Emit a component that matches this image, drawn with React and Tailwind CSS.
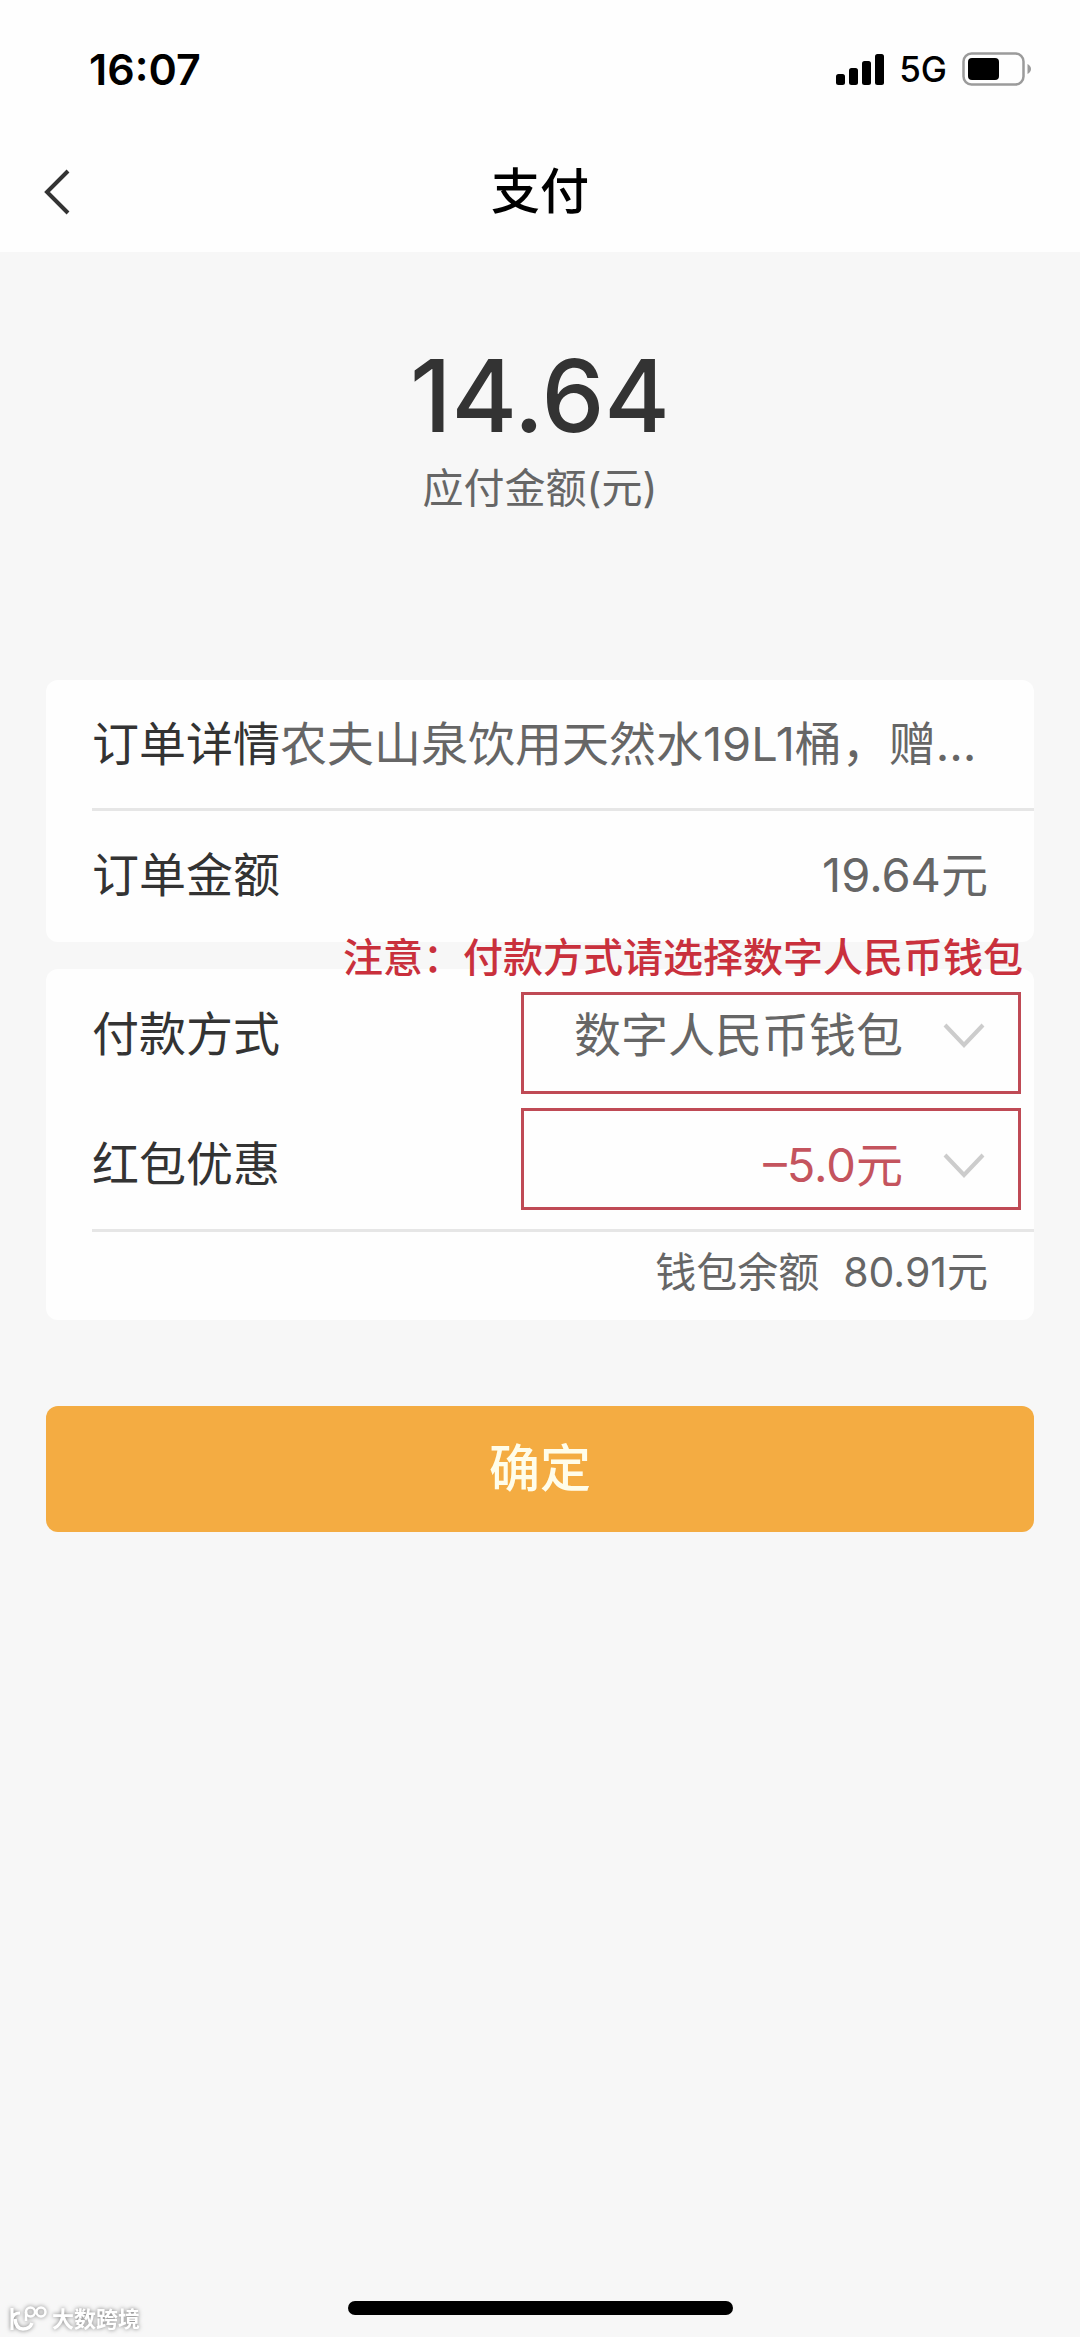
import { useState } from "react";

const SignalIcon = () => (
  <svg width="48" height="31" viewBox="0 0 48 31" fill="black" aria-hidden="true">
    <rect x="0" y="20" width="9" height="11" rx="2.5" />
    <rect x="13" y="14" width="9" height="17" rx="2.5" />
    <rect x="26" y="7" width="9" height="24" rx="2.5" />
    <rect x="39" y="0" width="9" height="31" rx="2.5" />
  </svg>
);

const BatteryIcon = () => (
  <svg width="70" height="34" viewBox="0 0 70 34" fill="none" aria-hidden="true">
    <rect x="1.5" y="1.5" width="60" height="31" rx="8" stroke="#9b9b9b" strokeWidth="2.5" />
    <rect x="6" y="6" width="31" height="22" rx="4" fill="black" />
    <path d="M65.5 12 Q69 14 69 17 Q69 20 65.5 22 Z" fill="#9b9b9b" />
  </svg>
);

const ChevronDown = () => (
  <svg
    className="absolute right-[33px] pointer-events-none"
    width="42"
    height="25"
    viewBox="0 0 42 25"
    fill="none"
    aria-hidden="true"
  >
    <path d="M2 2 L21 22 L40 2" stroke="#cccccc" strokeWidth="4" />
  </svg>
);

const StatusBar = () => (
  <div className="flex justify-between items-center pt-11 pr-12 pl-[89px] h-[94px]">
    <span className="font-semibold text-[43px] text-black leading-[50px]">16:07</span>
    <div className="flex items-center gap-[15px]">
      <SignalIcon />
      <span className="font-medium text-[35px] text-black leading-[50px]">5G</span>
      <BatteryIcon />
    </div>
  </div>
);

const Watermark = () => (
  <div className="bottom-1 left-2 absolute flex items-center gap-1 drop-shadow-[0_0_2px_rgba(0,0,0,0.5)]">
    <svg width="40" height="28" viewBox="0 0 40 28" fill="none" stroke="white" strokeWidth="3" aria-hidden="true">
      <path d="M4 3 V25 M4 14 Q5 8 12 8" />
      <path d="M7 14 Q8 24 15 24 Q22 24 24 18" strokeWidth="3.5" />
      <path d="M18 16 V7" strokeWidth="2.5" />
      <circle cx="22.5" cy="7" r="4.5" strokeWidth="2.5" />
      <circle cx="33" cy="7" r="4.5" strokeWidth="2.5" />
    </svg>
    <span className="font-bold text-[22px] text-white leading-7">大数跨境</span>
  </div>
);

const App = () => {
  const [method, setMethod] = useState("ecny");
  const [coupon, setCoupon] = useState("5");

  return (
    <div className="relative flex flex-col bg-[#f7f7f7] min-h-screen font-[Inter,'Noto_Sans_CJK_SC',sans-serif] text-[#333333] text-[47px] leading-[60px]">
      {/* Header */}
      <header className="bg-[#fefefe] h-[252px]">
        <StatusBar />
        <div className="items-center grid grid-cols-[1fr_auto_1fr] mt-[63px] px-[43px]">
          <button type="button" aria-label="返回" className="justify-self-start cursor-pointer">
            <svg width="28" height="46" viewBox="0 0 28 46" fill="none" aria-hidden="true">
              <path d="M25 2 L4 23 L25 44" stroke="#333333" strokeWidth="4" />
            </svg>
          </button>
          <h1 className="font-medium text-[49px] text-black leading-[70px]">支付</h1>
        </div>
      </header>

      <main className="px-[46px]">
        {/* Amount due */}
        <section className="pt-[84px] text-center">
          <p className="font-medium text-[100px] leading-[120px]">14.64</p>
          <p className="mt-1 text-[#666666] text-[41px] leading-[56px]">应付金额(元)</p>
        </section>

        {/* Order */}
        <section className="bg-[#fefefe] mt-[164px] pl-[46px] rounded-xl">
          <div className="flex items-center border-[#e6e6e6] border-b-3 h-[131px]">
            <span>订单详情</span>
            <span className="text-[#666666] whitespace-nowrap">农夫山泉饮用天然水19L1桶，赠…</span>
          </div>
          <div className="flex justify-between items-center pr-[46px] pb-1 h-[131px]">
            <span>订单金额</span>
            <span className="text-[#666666]">19.64元</span>
          </div>
        </section>

        {/* Payment */}
        <section className="relative bg-[#fefefe] mt-[27px] pl-[46px] rounded-xl">
          <p className="-top-9 right-[11px] absolute font-medium text-[#c9303c] text-[40px] leading-[50px] whitespace-nowrap">
            注意：付款方式请选择数字人民币钱包
          </p>
          <div className="flex border-[#e6e6e6] border-b-3 h-[263px]">
            <div className="flex flex-col flex-1">
              <label htmlFor="method" className="flex items-center h-[131px]">
                付款方式
              </label>
              <label htmlFor="coupon" className="flex items-center h-[131px]">
                红包优惠
              </label>
            </div>
            <div className="flex flex-col gap-[14px] pt-[23px] pr-[13px] w-[513px]">
              <div className="relative flex items-center pb-4 border-[#bf4a55] border-3 h-[102px]">
                <select
                  id="method"
                  value={method}
                  onChange={(e) => setMethod(e.target.value)}
                  className="bg-transparent pr-[115px] focus:outline-none w-full text-[#666666] text-right appearance-none cursor-pointer"
                >
                  <option value="ecny">数字人民币钱包</option>
                </select>
                <ChevronDown />
              </div>
              <div className="relative flex items-center pt-3 border-[#bf4a55] border-3 h-[102px]">
                <select
                  id="coupon"
                  value={coupon}
                  onChange={(e) => setCoupon(e.target.value)}
                  className="bg-transparent pr-[115px] focus:outline-none w-full text-[#c4545e] text-right appearance-none cursor-pointer"
                >
                  <option value="5">–5.0元</option>
                </select>
                <ChevronDown />
              </div>
            </div>
          </div>
          <div className="flex justify-end gap-6 pt-[10px] pr-[46px] h-[88px] text-[#666666] text-[41px]">
            <span>钱包余额</span>
            <span>80.91元</span>
          </div>
        </section>

        <button
          type="button"
          className="bg-[#f4ac42] mt-[86px] rounded-xl w-full h-[126px] font-medium text-[#fffdea] text-[51px] cursor-pointer"
        >
          确定
        </button>
      </main>

      {/* Home indicator */}
      <div className="self-center bg-black mt-auto mb-[22px] rounded-full w-[385px] h-[14px]"></div>
      <Watermark />
    </div>
  );
};

export default App;
